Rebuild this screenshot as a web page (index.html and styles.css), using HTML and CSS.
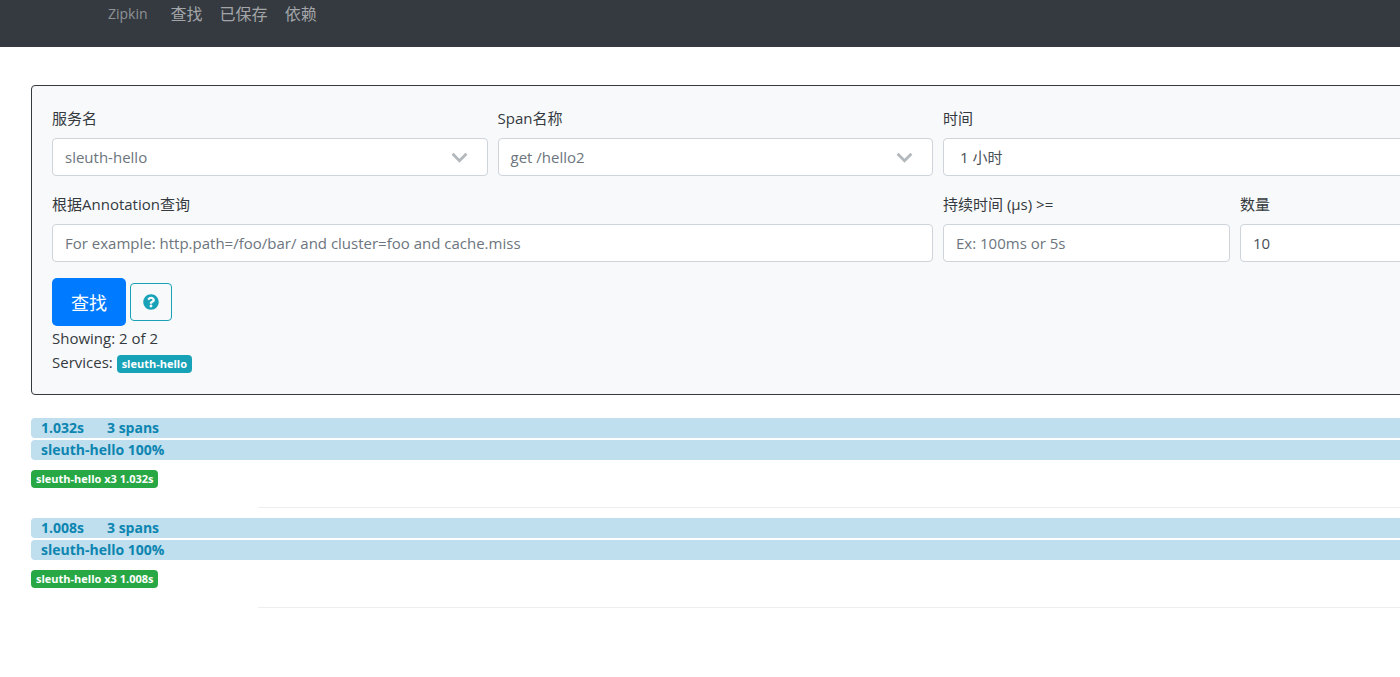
FILE: index.html
```html
<!DOCTYPE html>
<html>
<head>
    <meta charset="utf-8" />
    <title>Zipkin</title>
    <link rel="stylesheet" href="styles.css">
</head>
<body>
    <nav class="topbar">
        <a class="brand" href="#">Zipkin</a>
        <a class="navlink" href="#">查找</a>
        <a class="navlink" href="#">已保存</a>
        <a class="navlink" href="#">依赖</a>
    </nav>
    <div class="content">
        <form class="search">
            <div class="fields">
                <div class="field span3">
                    <label>服务名</label>
                    <div class="picker">
                        <span>sleuth-hello</span>
                        <svg class="chevron" viewBox="0 0 16 10"><path d="M1.5 1.5 8 8l6.500-6.500" /></svg>
                    </div>
                </div>
                <div class="field span3">
                    <label>Span名称</label>
                    <div class="picker">
                        <span>get /hello2</span>
                        <svg class="chevron" viewBox="0 0 16 10"><path d="M1.5 1.500 8 8l6.500-6.500" /></svg>
                    </div>
                </div>
                <div class="field span6">
                    <label>时间</label>
                    <select class="control">
                        <option>1 小时</option>
                    </select>
                </div>
                <div class="field span6">
                    <label>根据Annotation查询</label>
                    <input class="control" type="text" placeholder="For example: http.path=/foo/bar/ and cluster=foo and cache.miss" />
                </div>
                <div class="field span2">
                    <label>持续时间 (μs) &gt;=</label>
                    <input class="control" type="text" placeholder="Ex: 100ms or 5s" />
                </div>
                <div class="field span2">
                    <label>数量</label>
                    <input class="control" type="text" value="10" />
                </div>
            </div>
            <div class="actions">
                <button class="findbtn" type="button">查找</button>
                <button class="helpbtn" type="button">
                    <svg viewBox="0 0 512 512"><path d="M504 256c0 136.997-111.043 248-248 248S8 392.997 8 256C8 119.083 119.043 8 256 8s248 111.083 248 248zM262.655 90c-54.497 0-89.255 22.957-116.549 63.758-3.536 5.286-2.353 12.415 2.715 16.258l34.699 26.31c5.205 3.947 12.621 3.008 16.665-2.122 17.864-22.658 30.113-35.797 57.303-35.797 20.429 0 45.698 13.148 45.698 32.958 0 14.976-12.363 22.667-32.534 33.976C247.128 238.528 216 254.941 216 296v4c0 6.627 5.373 12 12 12h56c6.627 0 12-5.373 12-12v-1.333c0-28.462 83.186-29.647 83.186-106.667 0-58.002-60.165-102-116.531-102zM256 338c-25.365 0-46 20.635-46 46 0 25.364 20.635 46 46 46s46-20.636 46-46c0-25.365-20.635-46-46-46z" /></svg>
                </button>
            </div>
            <div class="summary">Showing: 2 of 2</div>
            <div class="summary">Services: <span class="badge badge-service">sleuth-hello</span></div>
        </form>

        <div class="trace">
            <div class="bar"><span class="duration">1.032s</span><span>3 spans</span></div>
            <div class="bar">sleuth-hello 100%</div>
            <div class="tags"><span class="badge badge-trace">sleuth-hello x3 1.032s</span></div>
            <div class="rule"></div>
        </div>
        <div class="trace">
            <div class="bar"><span class="duration">1.008s</span><span>3 spans</span></div>
            <div class="bar">sleuth-hello 100%</div>
            <div class="tags"><span class="badge badge-trace">sleuth-hello x3 1.008s</span></div>
            <div class="rule"></div>
        </div>
    </div>
</body>
</html>
```

FILE: styles.css
```css
* {
    box-sizing: border-box;
}

html, body {
    overflow-x: hidden;
}

body {
    margin: 0;
    background-color: #fff;
    color: #343a40;
    font-family: "Open Sans", "Noto Sans CJK SC", sans-serif;
    font-size: 15px;
    line-height: 24px;
}

.topbar {
    display: flex;
    align-items: flex-start;
    height: 47px;
    padding-left: 108px;
    background-color: #343a40;
}

.brand {
    margin-right: 23px;
    color: #8f9295;
    font-size: 14px;
    line-height: 28px;
    text-decoration: none;
}

.navlink {
    margin-right: 17px;
    color: #a3a5a8;
    font-size: 16px;
    line-height: 28px;
    text-decoration: none;
}

.content {
    width: 1800px;
    padding: 38px 0 0 31px;
}

.search {
    height: 310px;
    padding: 20px;
    background-color: #f8f9fa;
    border: 1px solid #343a40;
    border-radius: 4px;
}

.fields {
    display: grid;
    grid-template-columns: repeat(12, 138.5px);
    column-gap: 10px;
    row-gap: 16px;
}

.field label {
    display: block;
    height: 32px;
    padding-top: 0;
    color: #343a40;
}

.span2 { grid-column: span 2; }
.span3 { grid-column: span 3; }
.span6 { grid-column: span 6; }

.control, .picker {
    display: block;
    width: 100%;
    height: 38px;
    padding: 6px 12px;
    background-color: #fff;
    border: 1px solid #ced4da;
    border-radius: 4px;
    color: #495057;
    font-family: inherit;
    font-size: 15px;
}

.control::placeholder {
    color: #6c757d;
    opacity: 1;
}

.picker {
    display: flex;
    align-items: center;
    justify-content: space-between;
    color: #6c757d;
}

.chevron {
    width: 17px;
    height: 11px;
    margin-right: 7px;
    fill: none;
    stroke: #b3b8bd;
    stroke-width: 2.6;
}

.actions {
    display: flex;
    align-items: center;
    gap: 4px;
    margin-top: 16px;
}

.findbtn {
    width: 74px;
    height: 48px;
    background-color: #007bff;
    border: 0;
    border-radius: 5px;
    color: #fff;
    font-family: inherit;
    font-size: 18px;
}

.helpbtn {
    display: flex;
    align-items: center;
    justify-content: center;
    width: 42px;
    height: 38px;
    padding: 0;
    background: none;
    border: 1px solid #17a2b8;
    border-radius: 4px;
}

.helpbtn svg {
    width: 16px;
    height: 16px;
    fill: #17a2b8;
}

.summary {
    height: 24px;
}

.badge {
    display: inline-block;
    padding: 0 5px;
    border-radius: 4px;
    color: #fff;
    font-size: 11px;
    font-weight: 700;
    line-height: 18px;
    vertical-align: 0;
}

.badge-service {
    background-color: #17a2b8;
}

.badge-trace {
    background-color: #28a745;
}

.trace {
    height: 100px;
    padding-top: 0;
}

.content > .search + .trace {
    margin-top: 23px;
}

.bar {
    display: flex;
    height: 20px;
    margin-bottom: 2px;
    padding-left: 10px;
    background-color: #bfdeee;
    border-radius: 4px;
    color: #0c85b0;
    font-size: 14px;
    font-weight: 700;
    line-height: 20px;
}

.duration {
    width: 66px;
}

.tags {
    height: 45px;
    padding-top: 6px;
    line-height: 18px;
}

.rule {
    margin-left: 227px;
    border-top: 1px solid #eee;
}
```
